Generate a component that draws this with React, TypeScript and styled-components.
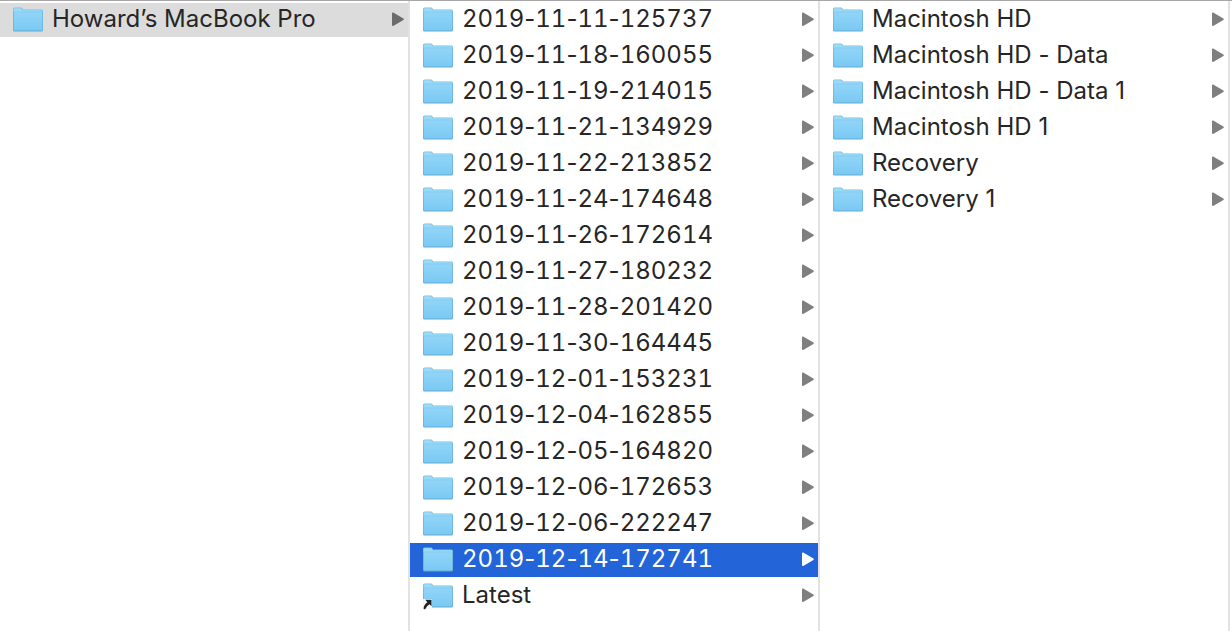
import React, { useState } from 'react';
import styled, { createGlobalStyle } from 'styled-components';

const GlobalStyle = createGlobalStyle`
  *, *::before, *::after { box-sizing: border-box; }
  body { margin: 0; background: #ffffff; }
`;

const Browser = styled.main`
  display: grid;
  grid-template-columns: repeat(3, minmax(0, 1fr));
  min-height: 100vh;
  padding-right: 2px;
  border-top: 1px solid #a8a6a8;
  background: #ffffff;
  color: #262626;
  font-family: Inter, 'Liberation Sans', sans-serif;
`;

const Column = styled.ul`
  display: flex;
  flex-direction: column;
  gap: 2px;
  margin: 0;
  padding: 2px 0 0;
  border-right: 2px solid #e2e2e2;
  list-style: none;
`;

type RowState = 'plain' | 'path' | 'active';

const rowBackground: Record<RowState, string> = {
  plain: 'transparent',
  path: '#dcdcdc',
  active: '#2364d9',
};

const Row = styled.button<{ $state: RowState }>`
  display: flex;
  align-items: center;
  gap: 9px;
  width: 100%;
  height: 34px;
  padding: 0 4px 0 13px;
  border: 0;
  background: ${({ $state }) => rowBackground[$state]};
  color: ${({ $state }) => ($state === 'active' ? '#ffffff' : 'inherit')};
  font-family: inherit;
  font-size: 24px;
  line-height: 32px;
  text-align: left;
`;

const Name = styled.span`
  flex: 1;
  min-width: 0;
  padding-bottom: 2px;
  overflow: hidden;
  white-space: nowrap;
  font-variant-ligatures: no-contextual;
`;

const Digits = styled.span`
  font-variant-numeric: tabular-nums;
`;

const Icon = styled.svg`
  flex: none;
  display: block;
`;

const Arrow = styled(Icon)<{ $state: RowState }>`
  color: ${({ $state }) =>
    $state === 'active' ? '#ffffff' : $state === 'path' ? '#6c6c6c' : '#7f7f7f'};
`;

function Folder({ alias = false }: { alias?: boolean }) {
  return (
    <Icon width="30" height="28" viewBox="0 0 30 28" aria-hidden="true">
      <defs>
        <linearGradient id="folder-front" x1="0" y1="0" x2="0" y2="1">
          <stop offset="0" stopColor="#92d5f7" />
          <stop offset="1" stopColor="#7ac9f4" />
        </linearGradient>
      </defs>
      <path d="M0 4.5V3Q0 1.5 1.5 1.5H8Q9 1.5 9.5 2.5L10 3.5H28.5Q30 3.5 30 5V8H0Z" fill="#72c0e6" />
      <path d="M.7 5V3.2Q.7 2.3 1.6 2.3H7.8Q8.5 2.3 9 3.3L9.5 4.3H28.3Q29.3 4.3 29.3 5.3V8H.7Z" fill="#9adcf8" />
      <path d="M0 6H30V24Q30 25.5 28.5 25.5H1.5Q0 25.5 0 24Z" fill="#62abd2" />
      <path d="M.6 6H29.4V23.4Q29.4 24.4 28.4 24.4H1.6Q.6 24.4 .6 23.4Z" fill="url(#folder-front)" />
      <path d="M.6 5.9H29.4" stroke="#78c3e9" strokeWidth=".6" />
      {alias && (
        <g>
          <path d="M0 17H9V26.5L0 28Z" fill="#f4f6f7" />
          <path d="M2.3 17.8H8.5V24.2L6.6 22.3Q3.2 24 2 27.4L.5 26.6Q.9 22.7 4.4 20.2Z" fill="#202020" />
        </g>
      )}
    </Icon>
  );
}

// Digits share one width so that dates line up; hyphens keep their own.
function FileName({ text }: { text: string }) {
  if (!/^\d/.test(text)) return <Name>{text}</Name>;
  return (
    <Name>
      {text.split('-').map((part, index) => (
        <React.Fragment key={index}>
          {index > 0 && '-'}
          <Digits>{part}</Digits>
        </React.Fragment>
      ))}
    </Name>
  );
}

interface Item {
  name: string;
  state?: RowState;
  alias?: boolean;
}

const computers: Item[] = [{ name: 'Howard’s MacBook Pro', state: 'path' }];

const backups: Item[] = [
  { name: '2019-11-11-125737' },
  { name: '2019-11-18-160055' },
  { name: '2019-11-19-214015' },
  { name: '2019-11-21-134929' },
  { name: '2019-11-22-213852' },
  { name: '2019-11-24-174648' },
  { name: '2019-11-26-172614' },
  { name: '2019-11-27-180232' },
  { name: '2019-11-28-201420' },
  { name: '2019-11-30-164445' },
  { name: '2019-12-01-153231' },
  { name: '2019-12-04-162855' },
  { name: '2019-12-05-164820' },
  { name: '2019-12-06-172653' },
  { name: '2019-12-06-222247' },
  { name: '2019-12-14-172741' },
  { name: 'Latest', alias: true },
];

const volumes: Item[] = [
  { name: 'Macintosh HD' },
  { name: 'Macintosh HD - Data' },
  { name: 'Macintosh HD - Data 1' },
  { name: 'Macintosh HD 1' },
  { name: 'Recovery' },
  { name: 'Recovery 1' },
];

interface FileColumnProps {
  label: string;
  items: Item[];
  selected?: string;
  onSelect?: (name: string) => void;
}

function FileColumn({ label, items, selected, onSelect }: FileColumnProps) {
  return (
    <Column aria-label={label}>
      {items.map((item) => {
        const state = item.name === selected ? 'active' : item.state ?? 'plain';
        return (
          <li key={item.name}>
            <Row type="button" $state={state} onClick={() => onSelect?.(item.name)}>
              <Folder alias={item.alias} />
              <FileName text={item.name} />
              <Arrow $state={state} width="12" height="16" viewBox="0 0 12 16" aria-hidden="true">
                <path
                  d="M.8 1.2L11 7.2L.8 13.2Z"
                  fill="currentColor"
                  stroke="currentColor"
                  strokeWidth="1.6"
                  strokeLinejoin="round"
                />
              </Arrow>
            </Row>
          </li>
        );
      })}
    </Column>
  );
}

export default function App() {
  const [selected, setSelected] = useState('2019-12-14-172741');
  return (
    <>
      <GlobalStyle />
      <Browser>
        <FileColumn label="Computers" items={computers} />
        <FileColumn label="Backups" items={backups} selected={selected} onSelect={setSelected} />
        <FileColumn label="Volumes" items={volumes} />
      </Browser>
    </>
  );
}
